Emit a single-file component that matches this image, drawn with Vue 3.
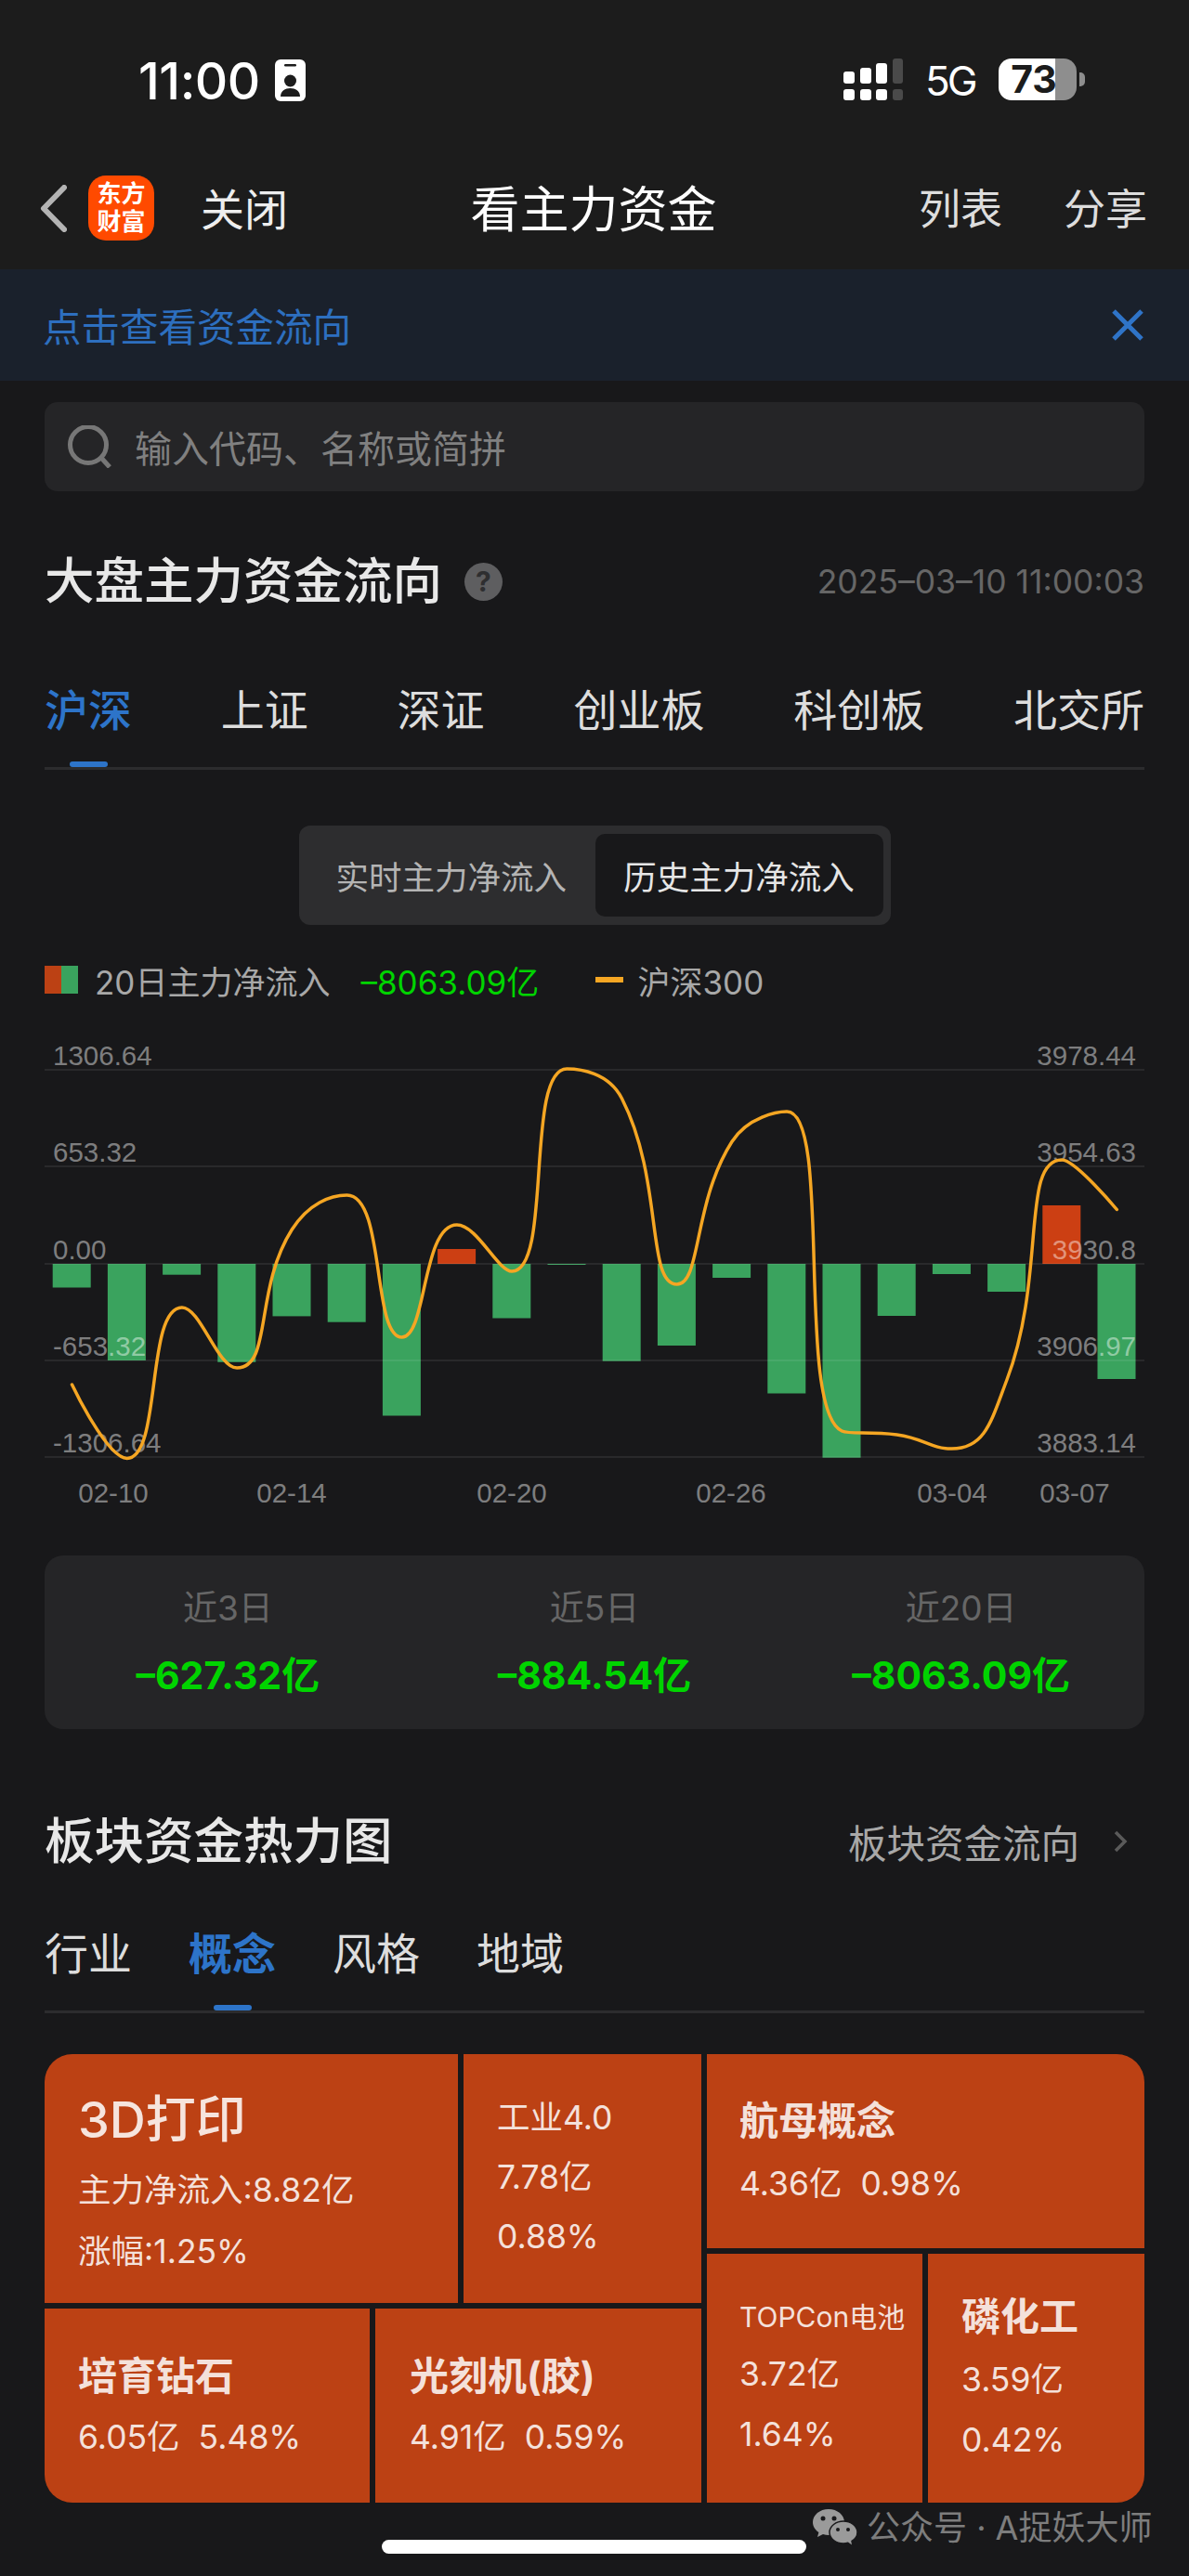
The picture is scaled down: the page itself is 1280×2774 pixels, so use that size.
<script setup>
// 主力资金 screen: chart geometry below is in svg px, the zero line sits at y=241
const zero = 241
const gridLines = [32, 136, 241, 345, 449]
const leftLabels = ['1306.64', '653.32', '0.00', '-653.32', '-1306.64']
const rightLabels = ['3978.44', '3954.63', '3930.8', '3906.97', '3883.14']
const dates = [
  ['02-10', 122], ['02-14', 314], ['02-20', 551],
  ['02-26', 787], ['03-04', 1025], ['03-07', 1157],
]

// negative = outflow, drawn green below the zero line
const flows = [-25.5, -104, -11.7, -105.8, -56.4, -62.7, -163.5, 16, -58.5, -1, -104.7, -88, -15, -139.5, -208.7, -56, -11, -30, 63, -124]
const bars = flows.map((v, i) => ({
  x: 56.7 + i * 59.2,
  y: v > 0 ? zero - v : zero,
  h: Math.abs(v),
  up: v > 0,
}))

const indexY = [371, 450.4, 288, 353, 204, 167, 320, 199, 249, 31, 63, 263, 109.5, 77, 421, 425, 440, 366, 129, 182.5]
const pts = indexY.map((y, i) => [77.5 + i * 59.2, y])

// same idea as echarts' smooth line: control points clamped to the neighbours
function smoothPath(p, smooth = 0.5) {
  const clamp = (v, a, b) => Math.max(Math.min(a, b), Math.min(v, Math.max(a, b)))
  let d = `M${p[0][0]} ${p[0][1]}`
  let cp0 = p[0]
  for (let i = 1; i < p.length; i++) {
    const [x, y] = p[i]
    const prev = p[i - 1]
    const next = p[i + 1]
    if (!next) {
      d += ` C${cp0[0]} ${cp0[1]} ${x} ${y} ${x} ${y}`
      break
    }
    const lenPrev = Math.hypot(x - prev[0], y - prev[1])
    const lenNext = Math.hypot(next[0] - x, next[1] - y)
    const ratio = lenNext / (lenNext + lenPrev)
    let nx = clamp(x + (next[0] - prev[0]) * smooth * ratio, next[0], x)
    let ny = clamp(y + (next[1] - prev[1]) * smooth * ratio, next[1], y)
    const c1x = clamp(x - ((nx - x) * lenPrev) / lenNext, prev[0], x)
    const c1y = clamp(y - ((ny - y) * lenPrev) / lenNext, prev[1], y)
    nx = x + ((x - c1x) * lenNext) / lenPrev
    ny = y + ((y - c1y) * lenNext) / lenPrev
    d += ` C${cp0[0].toFixed(1)} ${cp0[1].toFixed(1)} ${c1x.toFixed(1)} ${c1y.toFixed(1)} ${x.toFixed(1)} ${y}`
    cp0 = [nx, ny]
  }
  return d
}
const linePath = smoothPath(pts)

const tabs = ['沪深', '上证', '深证', '创业板', '科创板', '北交所']
const sectorTabs = ['行业', '概念', '风格', '地域']
const stats = [
  ['近3日', '–627.32亿'],
  ['近5日', '–884.54亿'],
  ['近20日', '–8063.09亿'],
]
</script>

<template>
  <div class="page">
    <header class="top">
      <div class="status">
        <div class="clock">
          <span class="time">11:00</span>
          <svg class="badge" width="33" height="45" viewBox="0 0 33 45">
            <rect width="33" height="45" rx="6" fill="#fff" />
            <rect x="10" y="5" width="13" height="2.5" rx="1.2" fill="#1c1c1c" />
            <circle cx="16.500" cy="23" r="6.500" fill="#1c1c1c" />
            <path d="M6 40c0-6 5-9 10.500-9S27 34 27 40z" fill="#1c1c1c" />
          </svg>
        </div>
        <div class="indicators">
          <svg width="64" height="45" viewBox="0 0 64 45">
            <rect x="0" y="33" width="12" height="12" rx="3" fill="#fff" />
            <rect x="18" y="33" width="12" height="12" rx="3" fill="#fff" />
            <rect x="35" y="33" width="12" height="12" rx="3" fill="#fff" />
            <rect x="53" y="33" width="11" height="12" rx="3" fill="#4a4a4a" />
            <rect x="0" y="14" width="12" height="13" rx="3" fill="#fff" />
            <rect x="18" y="10" width="12" height="17" rx="3" fill="#fff" />
            <rect x="35" y="5" width="12" height="22" rx="3" fill="#fff" />
            <rect x="53" y="0" width="11" height="27" rx="3" fill="#4a4a4a" />
          </svg>
          <span class="net">5G</span>
          <div class="battery">
            <span class="level">73</span>
          </div>
          <i class="battery-cap"></i>
        </div>
      </div>
      <nav class="nav">
        <div class="nav-left">
          <svg width="29" height="51" viewBox="0 0 29 51">
            <path d="M26 3L4 25.500 26 48" fill="none" stroke="#b4b4b4" stroke-width="6" stroke-linecap="round" stroke-linejoin="round" />
          </svg>
          <div class="logo"><span>东方</span><span>财富</span></div>
          <span class="close">关闭</span>
        </div>
        <div class="nav-title">看主力资金</div>
        <div class="nav-right"><span>列表</span><span>分享</span></div>
      </nav>
    </header>

    <div class="banner">
      <span>点击查看资金流向</span>
      <svg width="34" height="34" viewBox="0 0 34 34">
        <path d="M2 2l30 30M32 2L2 32" stroke="#2f74c8" stroke-width="5" fill="none" />
      </svg>
    </div>

    <main class="content">
      <div class="search">
        <svg width="48" height="46" viewBox="0 0 48 46">
          <circle cx="23" cy="21" r="19.500" fill="none" stroke="#777" stroke-width="5" />
          <path d="M37 35l9 10" stroke="#777" stroke-width="5" fill="none" />
        </svg>
        <span>输入代码、名称或简拼</span>
      </div>

      <div class="title-row first">
        <div class="title">
          大盘主力资金流向
          <span class="help">?</span>
        </div>
        <span class="stamp">2025–03–10 11:00:03</span>
      </div>

      <div class="tabs spread">
        <span v-for="(t, i) in tabs" :key="t" class="tab" :class="{ active: i === 0 }">{{ t }}</span>
      </div>

      <div class="toggle-wrap">
        <div class="toggle">
          <span class="opt">实时主力净流入</span>
          <span class="opt on">历史主力净流入</span>
        </div>
      </div>

      <div class="legend">
        <i class="swatch"></i>
        <span class="lg-name">20日主力净流入</span>
        <span class="lg-value">–8063.09亿</span>
        <i class="dash"></i>
        <span class="lg-name">沪深300</span>
      </div>

      <svg class="chart" width="1280" height="510" viewBox="0 0 1280 510">
        <rect
          v-for="(b, i) in bars"
          :key="i"
          :x="b.x"
          :y="b.y"
          width="41"
          :height="b.h"
          :fill="b.up ? '#cc3f13' : '#3aa35e'"
        />
        <line
          v-for="y in gridLines"
          :key="y"
          x1="48"
          x2="1232"
          :y1="y"
          :y2="y"
          stroke="#fff"
          stroke-opacity="0.1"
          stroke-width="1.500"
        />
        <text v-for="(l, i) in leftLabels" :key="l" class="axis" x="57" :y="gridLines[i] - 5">{{ l }}</text>
        <text v-for="(l, i) in rightLabels" :key="l" class="axis" x="1223" text-anchor="end" :y="gridLines[i] - 5">{{ l }}</text>
        <text v-for="d in dates" :key="d[0]" class="axis date" :x="d[1]" y="498" text-anchor="middle">{{ d[0] }}</text>
        <path :d="linePath" fill="none" stroke="#f5a623" stroke-width="3.500" stroke-linecap="round" />
      </svg>

      <div class="stats">
        <div v-for="s in stats" :key="s[0]" class="stat">
          <span class="stat-label">{{ s[0] }}</span>
          <span class="stat-value">{{ s[1] }}</span>
        </div>
      </div>

      <div class="title-row second">
        <div class="title">板块资金热力图</div>
        <div class="more">
          板块资金流向
          <svg width="16" height="24" viewBox="0 0 16 24">
            <path d="M3 2l10 10L3 22" fill="none" stroke="#5a5a5a" stroke-width="3.500" />
          </svg>
        </div>
      </div>

      <div class="tabs tight">
        <span v-for="(t, i) in sectorTabs" :key="t" class="tab" :class="{ active: i === 1, strong: i === 1 }">{{ t }}</span>
      </div>

      <div class="treemap">
        <div class="tm-left">
          <div class="tm-row upper">
            <div class="tile t-3d">
              <b>3D打印</b>
              <span>主力净流入:8.82亿</span>
              <span>涨幅:1.25%</span>
            </div>
            <div class="tile t-gy">
              <span>工业4.0</span>
              <span>7.78亿</span>
              <span>0.88%</span>
            </div>
          </div>
          <div class="tm-row lower">
            <div class="tile t-py">
              <b>培育钻石</b>
              <span>6.05亿&nbsp;&nbsp;5.48%</span>
            </div>
            <div class="tile t-gk">
              <b>光刻机(胶)</b>
              <span>4.91亿&nbsp;&nbsp;0.59%</span>
            </div>
          </div>
        </div>
        <div class="tm-right">
          <div class="tile t-hm">
            <b>航母概念</b>
            <span>4.36亿&nbsp;&nbsp;0.98%</span>
          </div>
          <div class="tm-row small">
            <div class="tile t-top">
              <em>TOPCon电池</em>
              <span>3.72亿</span>
              <span>1.64%</span>
            </div>
            <div class="tile t-lh">
              <b>磷化工</b>
              <span>3.59亿</span>
              <span>0.42%</span>
            </div>
          </div>
        </div>
      </div>
    </main>

    <div class="watermark">
      <svg width="48" height="40" viewBox="0 0 48 40">
        <path d="M17 0C7.600 0 0 6.300 0 14c0 4.500 2.500 8.400 6.400 11L5 30l6-3c2 .6 4 1 6 1 9.400 0 17-6.300 17-14S26.400 0 17 0z" fill="#9a9a9a" />
        <circle cx="11" cy="10" r="2.500" fill="#18181a" />
        <circle cx="23" cy="10" r="2.500" fill="#18181a" />
        <path d="M33 13c-8 0-15 5.300-15 12s7 12 15 12c1.700 0 3.300-.3 4.800-.7L43 40l-1-5.600c3.700-2.200 6-5.500 6-9.400 0-6.700-7-12-15-12z" fill="#9a9a9a" stroke="#18181a" stroke-width="1.500" />
        <circle cx="27" cy="22" r="2" fill="#18181a" />
        <circle cx="38" cy="22" r="2" fill="#18181a" />
      </svg>
      <span>公众号 · A捉妖大师</span>
    </div>
    <div class="home-bar"></div>
  </div>
</template>

<style scoped>
.page {
  position: relative;
  width: 1280px;
  height: 2774px;
  overflow: hidden;
  background: #18181a;
  color: #e6e6e6;
  font-family: Inter, "Noto Sans CJK SC", sans-serif;
}

.top {
  height: 290px;
  background: #1c1c1c;
}

.status {
  display: flex;
  align-items: flex-start;
  justify-content: space-between;
  padding: 63px 112px 0 149px;
  height: 81px;
}
.clock {
  display: flex;
  align-items: center;
  gap: 16px;
  height: 45px;
}
.badge { margin-top: 2px; }
.time {
  color: #fff;
  font-size: 55px;
  font-weight: 500;
  line-height: 45px;
  letter-spacing: -0.5px;
  margin-top: 3px;
}
.indicators {
  display: flex;
  align-items: flex-start;
}
.net {
  width: 56px;
  margin-left: 24px;
  margin-top: 2px;
  color: #fff;
  font-size: 44px;
  line-height: 45px;
  letter-spacing: -3px;
  white-space: nowrap;
}
.battery {
  margin-left: 23px;
  width: 84px;
  height: 45px;
  border-radius: 14px;
  background: linear-gradient(90deg, #fff 0 73%, #8e8e8e 73% 100%);
  color: #1c1c1c;
  text-align: center;
  font-size: 41px;
  font-weight: 700;
  line-height: 45px;
}
.level { margin-left: -8px; }
.battery-cap {
  width: 6px;
  height: 15px;
  margin: 15px 0 0 3px;
  background: #8e8e8e;
  border-radius: 0 5px 5px 0;
}

.nav {
  display: grid;
  grid-template-columns: 1fr auto 1fr;
  align-items: center;
  height: 70px;
  margin-top: 45px;
  padding: 0 45px 0 43px;
}
.nav-left {
  display: flex;
  align-items: center;
}
.logo {
  display: flex;
  flex-direction: column;
  align-items: center;
  justify-content: center;
  width: 71px;
  height: 70px;
  margin-left: 23px;
  border-radius: 19px;
  background: #ff4a00;
  color: #fff;
  font-size: 26px;
  font-weight: 700;
  line-height: 30px;
}
.close {
  margin-left: 50px;
  padding-top: 4px;
  color: #eee;
  font-size: 47px;
  line-height: 60px;
}
.nav-title {
  padding-top: 4px;
  color: #fff;
  font-size: 53px;
  line-height: 60px;
}
.nav-right {
  display: flex;
  justify-content: flex-end;
  gap: 66px;
  padding-top: 4px;
  color: #ddd;
  font-size: 45px;
  line-height: 60px;
}

.banner {
  display: flex;
  align-items: center;
  justify-content: space-between;
  height: 120px;
  padding: 0 49px 0 46px;
  background: #1a212c;
  color: #2d6fbf;
  font-size: 41.5px;
}

.content { padding: 0 48px; }

.search {
  display: flex;
  align-items: center;
  gap: 25px;
  height: 96px;
  margin-top: 23px;
  padding-left: 24px;
  border-radius: 14px;
  background: #252527;
  color: #808080;
  font-size: 40px;
}

.title-row {
  display: flex;
  align-items: center;
  justify-content: space-between;
  height: 60px;
}
.title-row.first { margin-top: 67px; }
.title-row.second { margin-top: 91px; }
.title {
  display: flex;
  align-items: center;
  color: #e8e8e8;
  font-size: 53.5px;
  font-weight: 500;
  line-height: 60px;
}
.help {
  display: flex;
  align-items: center;
  justify-content: center;
  width: 41px;
  height: 41px;
  margin-left: 24px;
  border-radius: 50%;
  background: #5e5e60;
  color: #2e2e30;
  font-size: 30px;
  font-weight: 700;
}
.stamp {
  color: #666;
  font-size: 35.5px;
}

.tabs {
  position: relative;
  display: flex;
  height: 91px;
  border-bottom: 3px solid #2c2c2e;
  font-size: 47px;
  line-height: 60px;
}
.tabs.spread {
  justify-content: space-between;
  margin-top: 79px;
}
.tabs.tight {
  gap: 61px;
  margin-top: 61px;
}
.tab {
  position: relative;
  height: 91px;
  color: #ddd;
}
.tab.active {
  color: #2d74c9;
  font-weight: 500;
}
.tab.strong { font-weight: 700; }
.tab.active::after {
  content: "";
  position: absolute;
  left: 50%;
  bottom: 0;
  width: 41px;
  height: 6px;
  margin-left: -20px;
  border-radius: 3px;
  background: #2d74c9;
}

.toggle-wrap {
  display: flex;
  justify-content: center;
  margin-top: 60px;
}
.toggle {
  display: flex;
  align-items: center;
  height: 107px;
  width: 637px;
  padding: 0 8px 0 40px;
  box-sizing: border-box;
  border-radius: 12px;
  background: #2d2d2f;
  font-size: 35.5px;
}
.opt { color: #b4b4b4; }
.opt.on {
  display: flex;
  align-items: center;
  justify-content: center;
  width: 310px;
  height: 89px;
  margin-left: auto;
  border-radius: 10px;
  background: #18181a;
  color: #e6e6e6;
}

.legend {
  display: flex;
  align-items: center;
  height: 40px;
  margin-top: 39px;
  font-size: 35px;
}
.swatch {
  width: 36px;
  height: 30px;
  background: linear-gradient(90deg, #bc4114 0 50%, #3aa35e 50% 100%);
}
.lg-name { color: #a8a8a8; }
.legend .swatch + .lg-name { margin-left: 18px; }
.lg-value {
  width: 193px;
  margin-left: 33px;
  color: #00d400;
  white-space: nowrap;
}
.dash {
  width: 30px;
  height: 6px;
  margin: 0 15px 0 60px;
  background: #f5a623;
}

.chart {
  display: block;
  margin: 45px 0 0 -48px;
}
.axis {
  fill: rgba(255, 255, 255, 0.45);
  font-family: "Liberation Sans", Arial, sans-serif;
  font-size: 29.5px;
}

.stats {
  display: grid;
  grid-template-columns: repeat(3, 1fr);
  height: 187px;
  margin-top: 45px;
  padding-top: 35px;
  box-sizing: border-box;
  border-radius: 20px;
  background: #252527;
}
.stat {
  display: flex;
  flex-direction: column;
  align-items: center;
  gap: 25px;
}
.stat-label {
  color: #666;
  font-size: 37px;
  line-height: 44px;
}
.stat-value {
  color: #00d400;
  font-size: 41px;
  font-weight: 700;
  line-height: 50px;
}

.more {
  display: flex;
  align-items: center;
  gap: 36px;
  padding-right: 18px;
  color: #a8a8a8;
  font-size: 41.5px;
}

.treemap {
  display: flex;
  gap: 6px;
  height: 483px;
  margin-top: 44px;
  border-radius: 30px;
  overflow: hidden;
  color: rgba(255, 255, 255, 0.86);
  font-size: 35.5px;
  line-height: 44px;
}
.tm-left {
  display: flex;
  flex-direction: column;
  gap: 6px;
  width: 707px;
}
.tm-right {
  display: flex;
  flex-direction: column;
  gap: 6px;
  flex: 1;
}
.tm-row {
  display: flex;
  gap: 6px;
}
.tm-row.upper { height: 268px; }
.tm-row.lower { flex: 1; }
.tm-row.small { flex: 1; }

.tile {
  display: flex;
  flex-direction: column;
  box-sizing: border-box;
  padding-left: 36px;
  background: #bc4114;
}
.tile b {
  font-size: 42px;
  font-weight: 700;
  line-height: 50px;
}
.tile em {
  font-size: 30px;
  font-style: normal;
  line-height: 40px;
}

.t-3d {
  width: 445px;
  padding: 41px 0 0 36px;
}
.t-3d b {
  font-size: 54px;
  font-weight: 500;
  line-height: 60px;
  margin-bottom: 24px;
}
.t-3d span + span { margin-top: 22px; }

.t-gy {
  flex: 1;
  padding-top: 47px;
  gap: 20px;
}
.t-py {
  width: 350px;
  padding: 48px 0 0 36px;
  gap: 19px;
}
.t-gk {
  flex: 1;
  padding: 48px 0 0 37px;
  gap: 19px;
}
.t-hm {
  height: 209px;
  padding: 47px 0 0 35px;
  gap: 21px;
}
.t-top {
  width: 232px;
  padding: 48px 0 0 35px;
}
.t-top span { margin-top: 20px; }
.t-top span + span { margin-top: 21px; }
.t-lh {
  flex: 1;
  padding-top: 43px;
}
.t-lh span { margin-top: 21px; }
.t-lh span + span { margin-top: 21px; }

.watermark {
  position: absolute;
  left: 875px;
  top: 2702px;
  display: flex;
  align-items: center;
  gap: 10px;
  color: #7d7d7d;
  font-size: 36px;
  line-height: 40px;
  white-space: nowrap;
}
.home-bar {
  position: absolute;
  left: 411px;
  top: 2735px;
  width: 457px;
  height: 15px;
  border-radius: 8px;
  background: #fff;
}
</style>

<style>
body {
  margin: 0;
  background: #18181a;
}
</style>
